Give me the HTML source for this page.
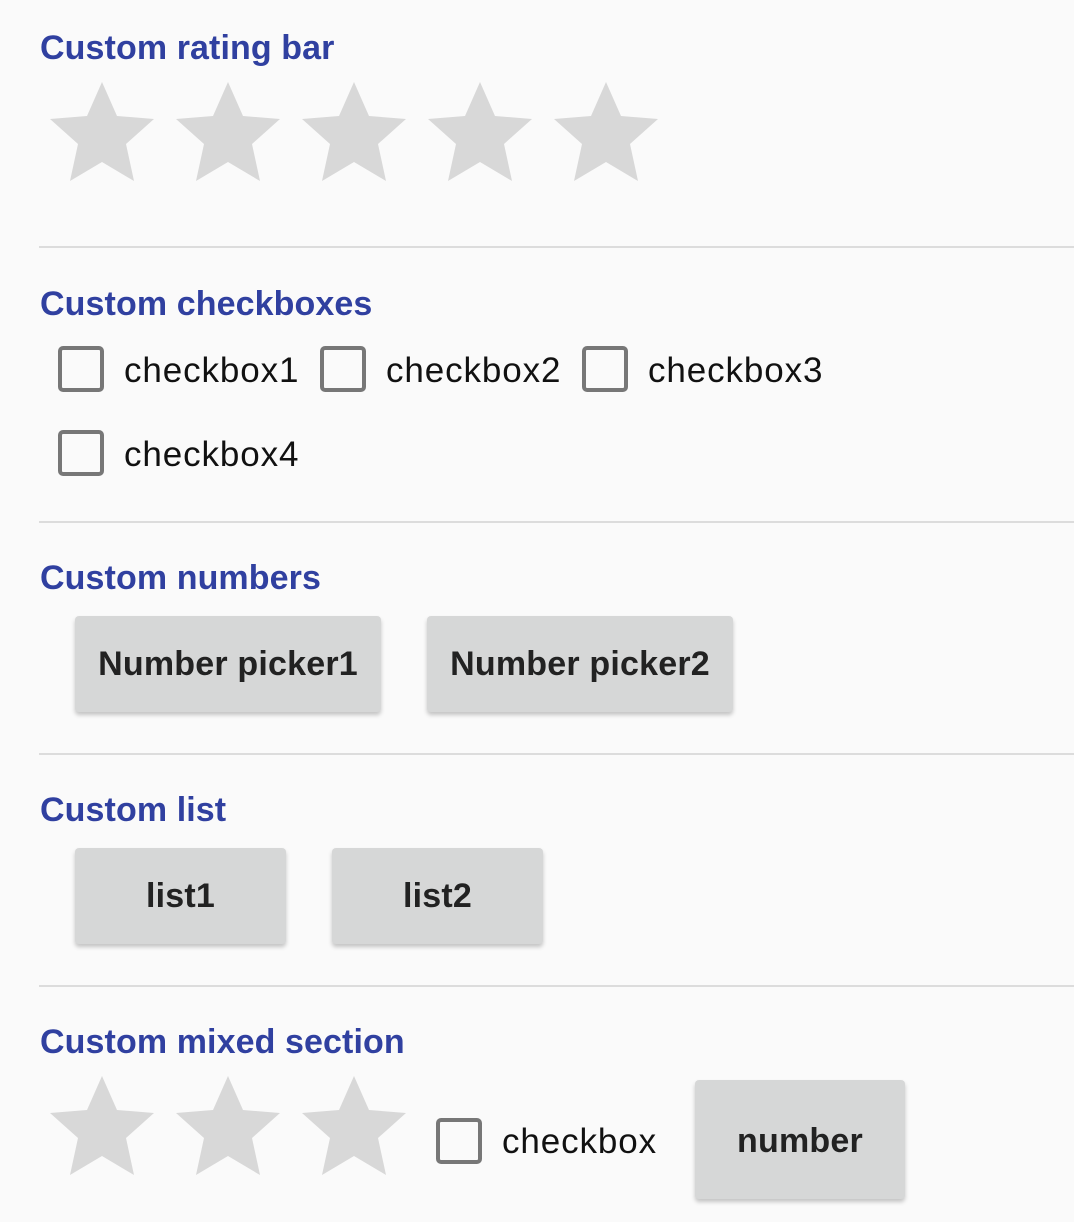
<!DOCTYPE html>
<html><head><meta charset="utf-8"><style>
*{margin:0;padding:0;box-sizing:border-box}
body{width:1074px;height:1222px;background:#fafafa;position:relative;overflow:hidden;font-family:"Liberation Sans",sans-serif}
.h{position:absolute;left:40px;font-size:34px;color:#3040a0;font-weight:bold;line-height:40px;letter-spacing:0.1px}
.hr{position:absolute;left:39px;right:0;height:2px;background:#dcdcdc}
.star{position:absolute;width:105px;height:100px}
.cb{position:absolute;width:46px;height:46px;border:4px solid #777;border-radius:5px}
.lb{position:absolute;font-size:35px;color:#111;line-height:40px;letter-spacing:0.9px}
.btn{position:absolute;background:#d6d7d7;border-radius:4px;box-shadow:0 3px 4px rgba(0,0,0,0.22);font-size:34px;font-weight:bold;color:#222;display:flex;align-items:center;justify-content:center;letter-spacing:0.2px}
</style></head><body>
<svg width="0" height="0" style="position:absolute"><defs><symbol id="s" viewBox="0 0 105 100"><polygon fill="#d8d8d8" points="52,0 67,34 104,37 76,62 84,99 52,80 20,99 28,62 0,37 37,34"/></symbol></defs></svg>

<div class="h" style="top:28px">Custom rating bar</div>
<svg class="star" style="left:50px;top:82px"><use href="#s"/></svg>
<svg class="star" style="left:176px;top:82px"><use href="#s"/></svg>
<svg class="star" style="left:302px;top:82px"><use href="#s"/></svg>
<svg class="star" style="left:428px;top:82px"><use href="#s"/></svg>
<svg class="star" style="left:554px;top:82px"><use href="#s"/></svg>
<div class="hr" style="top:246px"></div>

<div class="h" style="top:284px">Custom checkboxes</div>
<div class="cb" style="left:58px;top:346px"></div><div class="lb" style="left:124px;top:351px">checkbox1</div>
<div class="cb" style="left:320px;top:346px"></div><div class="lb" style="left:386px;top:351px">checkbox2</div>
<div class="cb" style="left:582px;top:346px"></div><div class="lb" style="left:648px;top:351px">checkbox3</div>
<div class="cb" style="left:58px;top:430px"></div><div class="lb" style="left:124px;top:435px">checkbox4</div>
<div class="hr" style="top:521px"></div>

<div class="h" style="top:558px">Custom numbers</div>
<div class="btn" style="left:75px;top:616px;width:306px;height:96px">Number picker1</div>
<div class="btn" style="left:427px;top:616px;width:306px;height:96px">Number picker2</div>
<div class="hr" style="top:753px"></div>

<div class="h" style="top:790px">Custom list</div>
<div class="btn" style="left:75px;top:848px;width:211px;height:96px">list1</div>
<div class="btn" style="left:332px;top:848px;width:211px;height:96px">list2</div>
<div class="hr" style="top:985px"></div>

<div class="h" style="top:1022px">Custom mixed section</div>
<svg class="star" style="left:50px;top:1076px"><use href="#s"/></svg>
<svg class="star" style="left:176px;top:1076px"><use href="#s"/></svg>
<svg class="star" style="left:302px;top:1076px"><use href="#s"/></svg>
<div class="cb" style="left:436px;top:1118px"></div><div class="lb" style="left:502px;top:1122px">checkbox</div>
<div class="btn" style="left:695px;top:1080px;width:210px;height:119px;padding-top:3px">number</div>
</body></html>
